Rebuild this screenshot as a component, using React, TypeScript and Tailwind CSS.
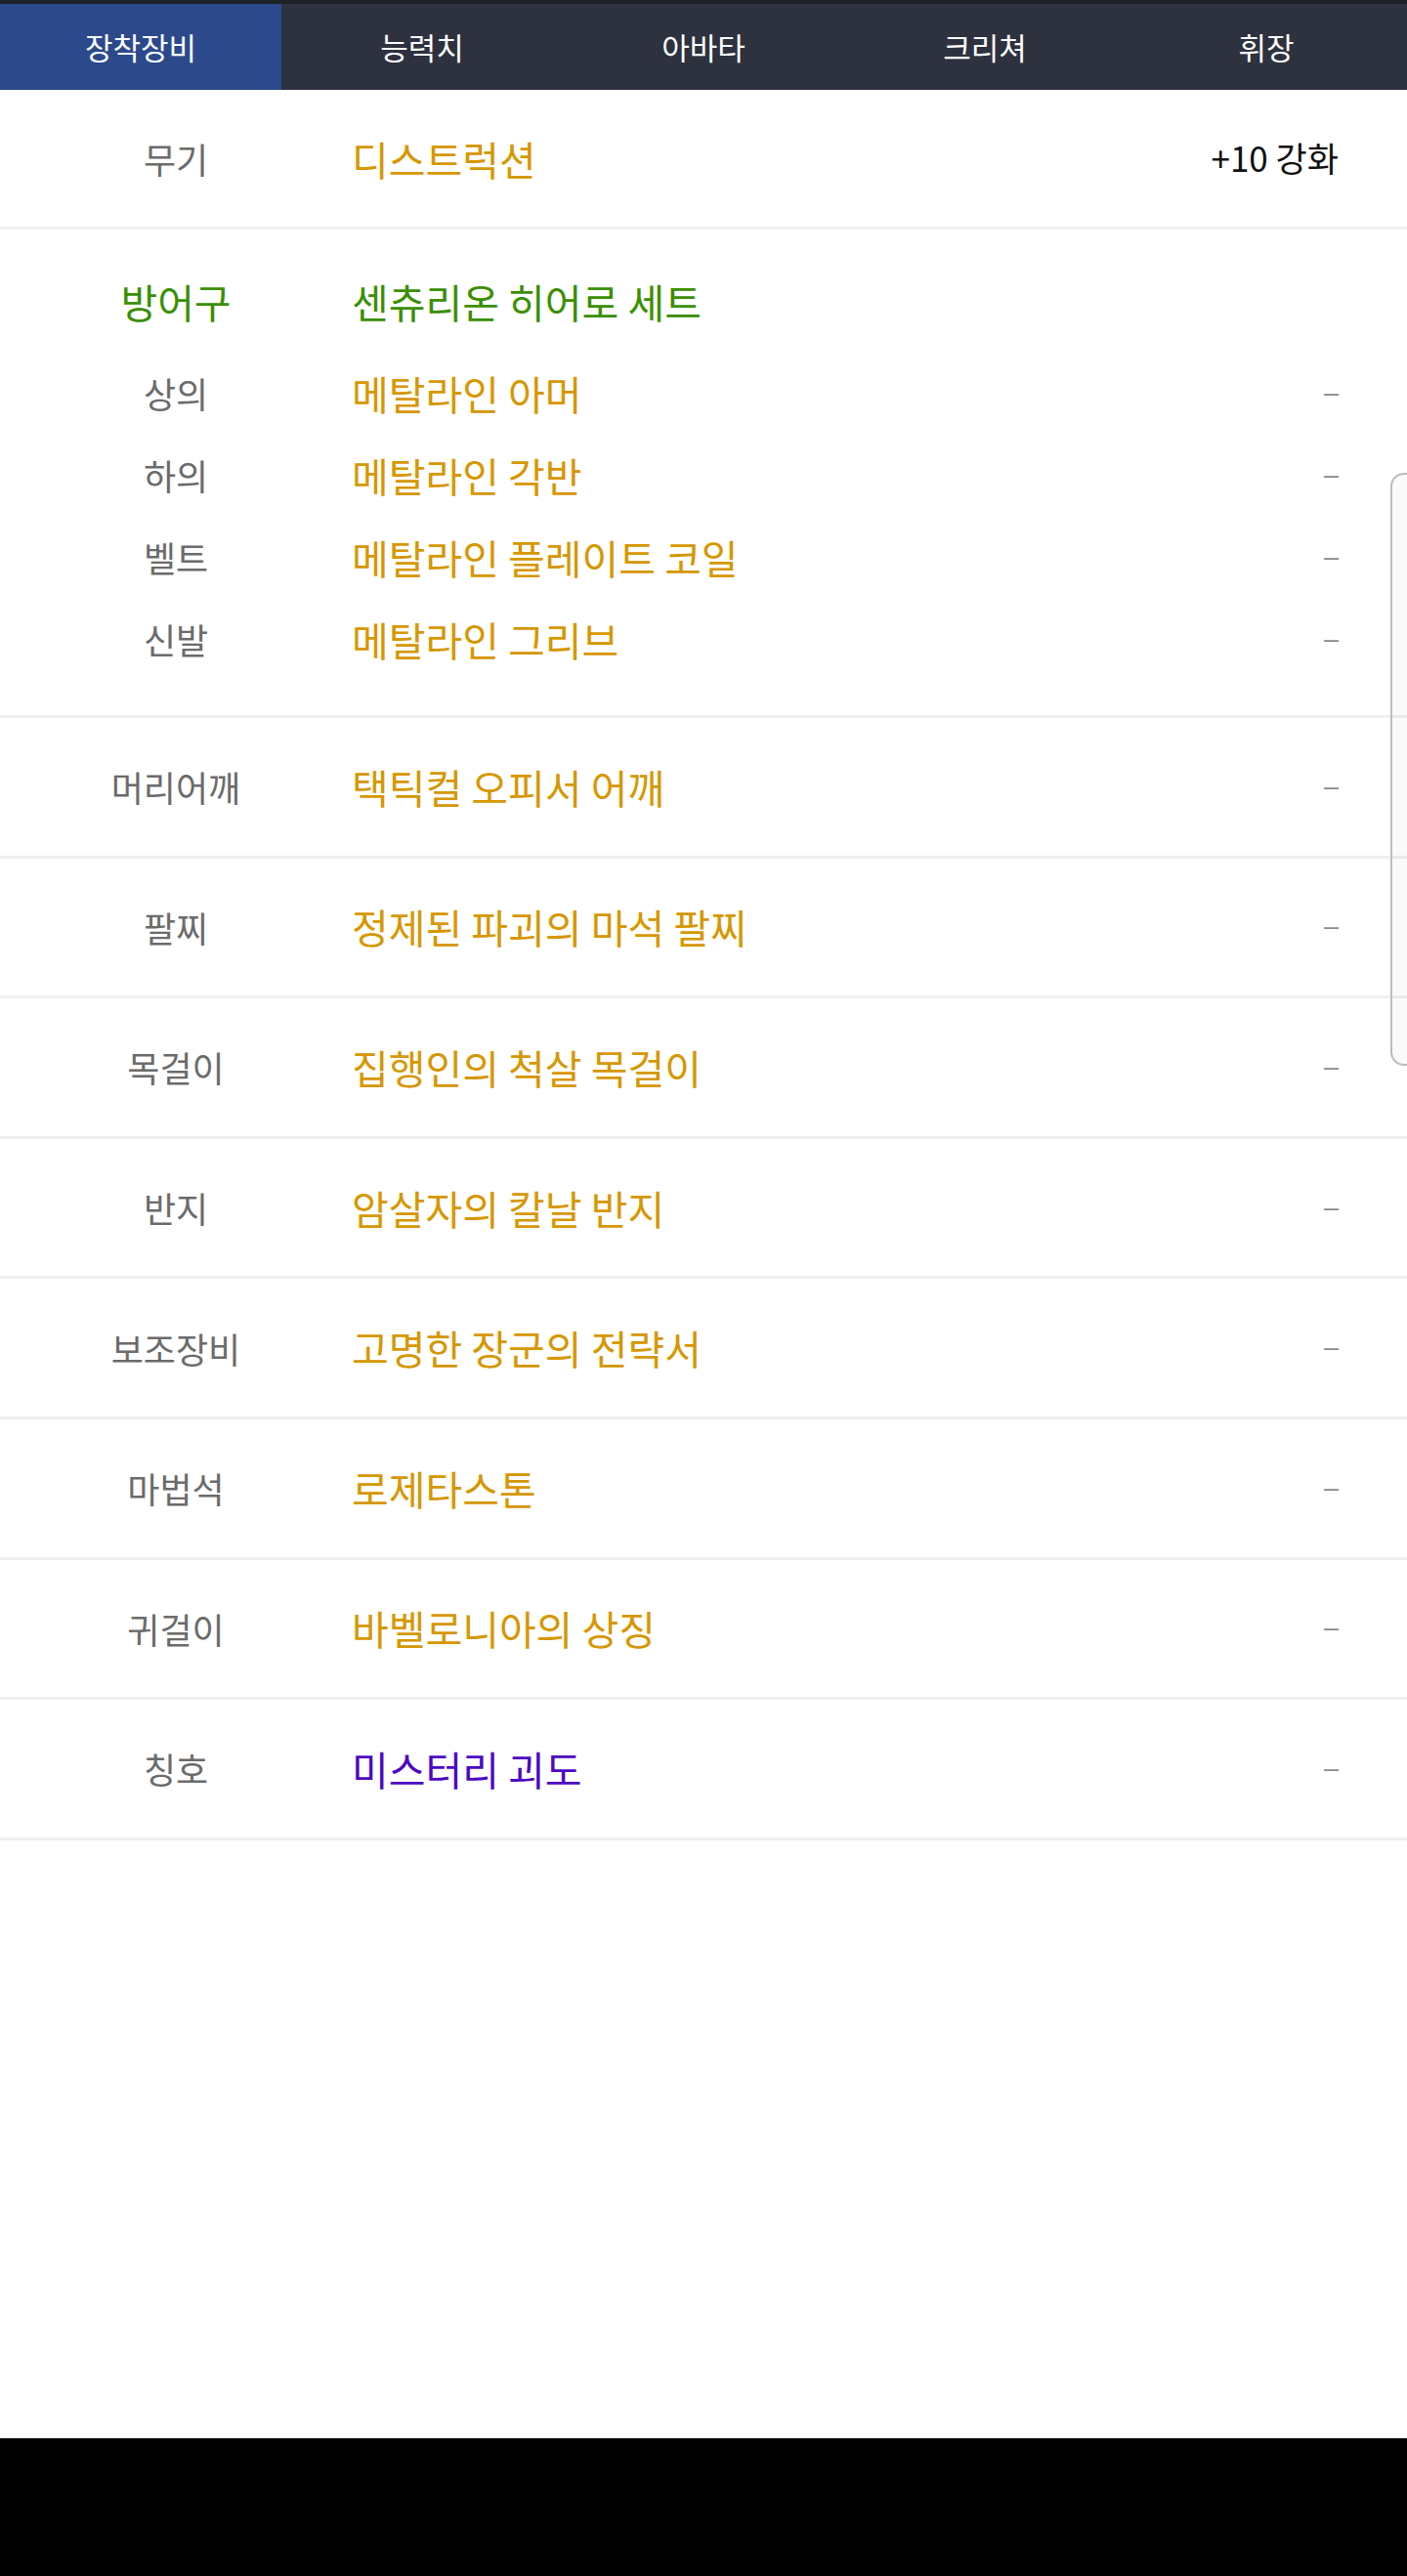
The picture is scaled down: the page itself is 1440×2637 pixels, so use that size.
import React from 'react';

const FONT = "font-['Noto_Sans_CJK_KR',_'Noto_Sans',_sans-serif]";

const tabs = ['장착장비', '능력치', '아바타', '크리쳐', '휘장'];

const armorParts = [
  { label: '상의', name: '메탈라인 아머' },
  { label: '하의', name: '메탈라인 각반' },
  { label: '벨트', name: '메탈라인 플레이트 코일' },
  { label: '신발', name: '메탈라인 그리브' },
];

const gear = [
  { label: '머리어깨', name: '택틱컬 오피서 어깨' },
  { label: '팔찌', name: '정제된 파괴의 마석 팔찌' },
  { label: '목걸이', name: '집행인의 척살 목걸이' },
  { label: '반지', name: '암살자의 칼날 반지' },
  { label: '보조장비', name: '고명한 장군의 전략서' },
  { label: '마법석', name: '로제타스톤' },
  { label: '귀걸이', name: '바벨로니아의 상징' },
  { label: '칭호', name: '미스터리 괴도', title: true },
];

function Dash() {
  return (
    <span className="font-['Liberation_Sans',_sans-serif] text-[27px] leading-none text-[#8a8a8a]">–</span>
  );
}

function GearLine({ label, name, nameClass, right, height }: {
  label: string;
  name: string;
  nameClass: string;
  right?: React.ReactNode;
  height: string;
}) {
  return (
    <div className={`flex items-center ${height}`}>
      <div className="w-[360px] text-center text-[36px] leading-none text-[#6b6b6b]">{label}</div>
      <div className={`flex-1 text-[41px] leading-none ${nameClass}`}>{name}</div>
      <div className="pr-[70px]">{right ?? <Dash />}</div>
    </div>
  );
}

export default function App() {
  return (
    <div className={`relative flex h-[2637px] flex-col bg-white ${FONT}`}>
      <div className="h-[4px] bg-[#1e2128]" />
      <nav className="grid h-[88px] grid-cols-5 bg-[#2d323e]">
        {tabs.map((t, i) => (
          <div
            key={t}
            className={`flex items-center justify-center text-[31px] text-white ${i === 0 ? 'bg-[#2c4a8b]' : ''}`}
          >
            {t}
          </div>
        ))}
      </nav>

      <main className="flex-1">
        <div className="border-b-[3px] border-[#efefef]">
          <GearLine
            label="무기"
            name="디스트럭션"
            nameClass="text-[#d69700]"
            height="h-[140px]"
            right={<span className="text-[35px] leading-none text-[#111]">+10 강화</span>}
          />
        </div>

        <div className="border-b-[3px] border-[#efefef] pt-[31px] pb-[36px]">
          <div className="flex h-[84px] items-center">
            <div className="w-[360px] text-center text-[41px] leading-none text-[#3a8f00]">방어구</div>
            <div className="flex-1 text-[41px] leading-none text-[#3a8f00]">센츄리온 히어로 세트</div>
          </div>
          <div className="mt-[10px]">
            {armorParts.map((p) => (
              <GearLine key={p.label} label={p.label} name={p.name} nameClass="text-[#d69700]" height="h-[84px]" />
            ))}
          </div>
        </div>

        {gear.map((g) => (
          <div key={g.label} className="border-b-[3px] border-[#efefef]">
            <GearLine
              label={g.label}
              name={g.name}
              nameClass={g.title ? 'text-[#4c08c4]' : 'text-[#d69700]'}
              height="h-[140.6px]"
            />
          </div>
        ))}
      </main>

      <div className="h-[141px] bg-black" />

      <div className="absolute left-[1423px] top-[484px] h-[607px] w-[30px] rounded-l-[14px] border-2 border-r-0 border-[#bcbcbc] bg-black/[0.02]" />
    </div>
  );
}
